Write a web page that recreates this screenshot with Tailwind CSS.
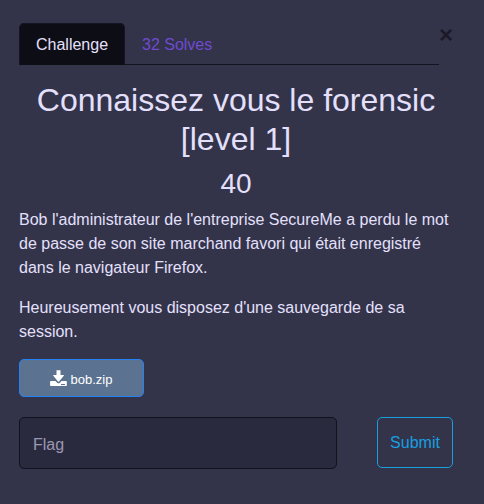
<!DOCTYPE html>
<html lang="fr"><head><meta charset="utf-8"><title>Challenge</title>
<script src="https://cdn.jsdelivr.net/npm/@tailwindcss/browser@4"></script></head>
<body class="bg-[#33334a] text-[#e4e0fc] font-['Liberation_Sans',Arial,sans-serif] text-base leading-6 h-[504px] overflow-hidden">
<main class="pl-[19px] pr-[31px] pt-[23px]">
<div class="flex">
<nav class="flex w-[420px] h-[42px] border-b border-[#141420]">
<a class="w-[106px] h-[42px] pt-[9px] pl-[16px] rounded-t-[5px] border border-b-0 border-[#141422] bg-[#0d0d16]">Challenge</a>
<a class="pt-[10px] pl-[17px] text-[#6f4bd0]">32 Solves</a>
</nav>
<button class="w-[14px] h-6 text-2xl leading-6 font-bold text-[#1a1a28]">×</button>
</div>
<h2 class="mt-4 text-center text-[32px] leading-[39px]">Connaissez vous le forensic [level 1]</h2>
<h3 class="mt-[8px] text-center text-[28px] leading-[33px]">40</h3>
<p class="mt-[8px]">Bob l'administrateur de l'entreprise SecureMe a perdu le mot de passe de son site marchand favori qui était enregistré dans le navigateur Firefox.</p>
<p class="mt-4">Heureusement vous disposez d'une sauvegarde de sa session.</p>
<a class="mt-[15px] flex w-[125px] h-[38px] items-center justify-center gap-1 rounded-[5px] border border-[#2582f5] bg-[#5b7290] pt-[3px] text-white text-[13px]">
<svg class="w-[17px] h-4 -mt-[3px] -ml-px" viewBox="0 0 17 16" fill="currentColor"><path fill-rule="evenodd" d="M6.5.2h4V5h3.1q.6.2.2.8L9 11.4q-.5.5-1 0L3.3 5.8Q2.8 5.1 3.4 5h3.1zM.8 11h4.7l1.6 1.7q1.4 1 2.8 0l1.6-1.7h4.7q.6 0 .6.7v3.6q0 .7-.6.7H.8q-.7 0-.7-.7v-3.6q0-.7.7-.7zM11 14v1h4v-1z"/></svg>bob.zip</a>
<div class="mt-5 flex justify-between">
<input class="w-[318px] h-[52px] rounded-[5px] border border-[#12121e] bg-[#2a2a3e] px-[13px] pt-[4px] placeholder:text-[#9a98b2]" placeholder="Flag">
<button class="w-[76px] h-[51px] rounded-[5px] border border-[#179fe0] text-[#179fe0]">Submit</button>
</div>
</main></body></html>
